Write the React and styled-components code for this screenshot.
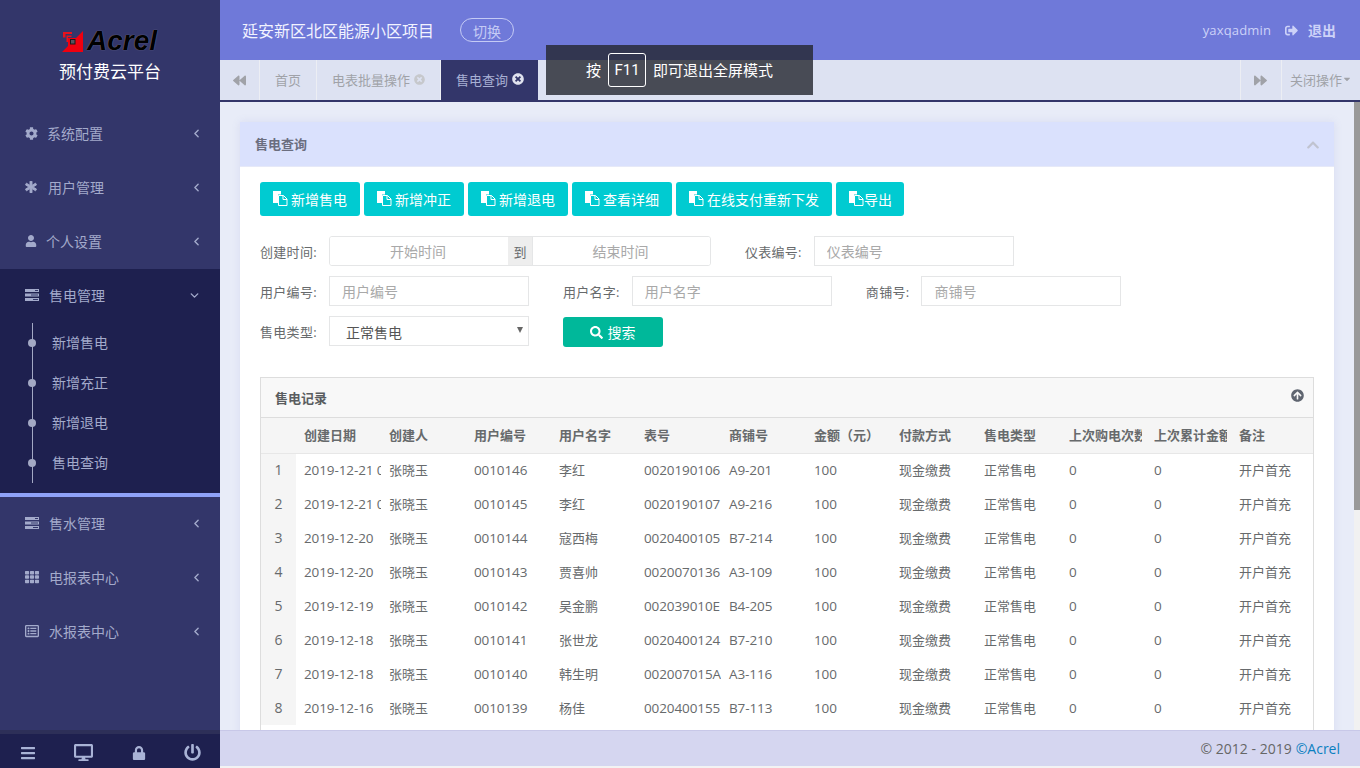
import React from 'react'
import styled, { createGlobalStyle } from 'styled-components'
import {
  FaCog, FaAsterisk, FaUser, FaTh, FaRegListAlt, FaBars, FaDesktop, FaLock, FaPowerOff,
  FaBackward, FaForward, FaSignOutAlt, FaSearch, FaChevronUp, FaArrowCircleUp,
  FaTimesCircle, FaCaretDown,
} from 'react-icons/fa'
import { ChevronLeft, ChevronDown } from 'lucide-react'

const FONT = '"Open Sans", "Noto Sans CJK SC", sans-serif'

const GlobalStyle = createGlobalStyle`
  html, body { margin: 0; padding: 0; height: 100%; overflow: hidden; }
  body { font-family: ${FONT}; font-size: 13px; color: #676a6c; background: #f3f3f3; }
  * { box-sizing: border-box; }
`

const TasksIcon = () => (
  <svg width="14" height="12" viewBox="0 0 14 12" fill="currentColor">
    <rect x="0" y="0" width="14" height="3" />
    <rect x="0" y="4.5" width="14" height="3" />
    <rect x="0" y="9" width="14" height="3" />
    <rect x="10" y="1" width="3" height="1" fill="#33366a" />
    <rect x="6" y="5.5" width="7" height="1" fill="#33366a" />
    <rect x="8" y="10" width="5" height="1" fill="#33366a" />
  </svg>
)

const FilesIcon = () => (
  <svg width="15" height="15" viewBox="0 0 15 15">
    <path d="M0 0h8v3.5H5V12H0z" fill="#fff" />
    <path d="M5.5 4.5h5l3.5 3.5v6.5H5.5z" fill="none" stroke="#fff" />
    <path d="M10 4.5v4h4" fill="none" stroke="#fff" />
  </svg>
)

const LogoMark = () => (
  <svg width="21" height="21" viewBox="0 0 21 21">
    <path d="M21 0v21H0l6-6V7h8z" fill="#f0000f" />
    <path d="M1 1h9v2H3.5v3.5H1z" fill="#e8121c" />
    <path d="M4.5 4.5h5V6H6v5H4.5z" fill="#e8121c" />
    <rect x="8.5" y="8.5" width="4.5" height="4.5" fill="#55555f" stroke="#1a1a1a" />
  </svg>
)

const menuTop = [
  { label: '系统配置', icon: <FaCog size={13} />, slot: 22 },
  { label: '用户管理', icon: <FaAsterisk size={12} stroke="currentColor" strokeWidth={40} />, slot: 23 },
  { label: '个人设置', icon: <FaUser size={12} />, slot: 21 },
]
const menuBottom = [
  { label: '售水管理', icon: <TasksIcon />, slot: 24 },
  { label: '电报表中心', icon: <FaTh size={14} />, slot: 24 },
  { label: '水报表中心', icon: <FaRegListAlt size={14} />, slot: 24 },
]
const subMenu = ['新增售电', '新增充正', '新增退电', '售电查询']
const actions = [
  { label: '新增售电' },
  { label: '新增冲正' },
  { label: '新增退电' },
  { label: '查看详细' },
  { label: '在线支付重新下发' },
  { label: '导出', tight: true },
]
const columns = ['创建日期', '创建人', '用户编号', '用户名字', '表号', '商铺号', '金额（元）', '付款方式', '售电类型', '上次购电次数', '上次累计金额', '备注']
const records = [
  ['2019-12-21 09:12:33', '0010146', '李红', '0020190106', 'A9-201'],
  ['2019-12-21 09:05:18', '0010145', '李红', '0020190107', 'A9-216'],
  ['2019-12-20', '0010144', '寇西梅', '0020400105', 'B7-214'],
  ['2019-12-20', '0010143', '贾喜帅', '0020070136', 'A3-109'],
  ['2019-12-19', '0010142', '吴金鹏', '002039010E', 'B4-205'],
  ['2019-12-18', '0010141', '张世龙', '0020400124', 'B7-210'],
  ['2019-12-18', '0010140', '韩生明', '002007015A', 'A3-116'],
  ['2019-12-16', '0010139', '杨佳', '0020400155', 'B7-113'],
]

export default function App() {
  return (
    <Page>
      <GlobalStyle />
      <Sidebar>
        <Brand>
          <Logo>
            <LogoMark />
            <LogoWord>Acrel</LogoWord>
          </Logo>
          <BrandTitle>预付费云平台</BrandTitle>
        </Brand>
        <Menu>
          {menuTop.map((m) => (
            <MenuItem key={m.label}>
              <MenuIcon $slot={m.slot}>{m.icon}</MenuIcon>
              <span>{m.label}</span>
              <Arrow><ChevronLeft size={13} strokeWidth={2.6} /></Arrow>
            </MenuItem>
          ))}
          <ActiveGroup>
            <MenuItem>
              <MenuIcon $slot={24}><TasksIcon /></MenuIcon>
              <span>售电管理</span>
              <ArrowDown><ChevronDown size={13} strokeWidth={2.6} /></ArrowDown>
            </MenuItem>
            <SubList>
              {subMenu.map((s) => (
                <SubItem key={s}>{s}</SubItem>
              ))}
            </SubList>
          </ActiveGroup>
          {menuBottom.map((m) => (
            <MenuItem key={m.label}>
              <MenuIcon $slot={m.slot}>{m.icon}</MenuIcon>
              <span>{m.label}</span>
              <Arrow><ChevronLeft size={13} strokeWidth={2.6} /></Arrow>
            </MenuItem>
          ))}
        </Menu>
        <SideFooter>
          <FaBars size={16} />
          <FaDesktop size={19} />
          <FaLock size={14} />
          <FaPowerOff size={17} />
        </SideFooter>
      </Sidebar>

      <Main>
        <TopBar>
          <ProjectName>延安新区北区能源小区项目</ProjectName>
          <SwitchButton>切换</SwitchButton>
          <UserBox>
            <UserName>yaxqadmin</UserName>
            <FaSignOutAlt size={13} />
            <Logout>退出</Logout>
          </UserBox>
        </TopBar>

        <TabBar>
          <TabArrow $left><FaBackward size={13} /></TabArrow>
          <Tab>首页</Tab>
          <Tab>
            电表批量操作
            <TabClose><FaTimesCircle size={11} /></TabClose>
          </Tab>
          <Tab $active>
            售电查询
            <TabClose $active><FaTimesCircle size={12} /></TabClose>
          </Tab>
          <TabSpacer />
          <TabArrow><FaForward size={13} /></TabArrow>
          <CloseMenu>
            关闭操作
            <FaCaretDown size={10} />
          </CloseMenu>
        </TabBar>

        <FullscreenToast>
          按<KeyCap>F11</KeyCap>即可退出全屏模式
        </FullscreenToast>

        <Body>
          <Scroller>
            <Panel>
              <PanelHead>
                <span>售电查询</span>
                <Collapse><FaChevronUp size={14} /></Collapse>
              </PanelHead>
              <PanelBody>
                <Actions>
                  {actions.map((a) => (
                    <ActionButton key={a.label} $tight={a.tight}>
                      <FilesIcon />
                      <span>{a.label}</span>
                    </ActionButton>
                  ))}
                </Actions>

                <FormRow>
                  <Field>
                    <Label>创建时间:</Label>
                    <DateRange>
                      <DateInput $start placeholder="开始时间" />
                      <RangeAddon>到</RangeAddon>
                      <DateInput placeholder="结束时间" />
                    </DateRange>
                  </Field>
                  <Field>
                    <Label>仪表编号:</Label>
                    <TextInput placeholder="仪表编号" />
                  </Field>
                </FormRow>
                <FormRow>
                  <Field>
                    <Label>用户编号:</Label>
                    <TextInput placeholder="用户编号" />
                  </Field>
                  <Field>
                    <Label>用户名字:</Label>
                    <TextInput placeholder="用户名字" />
                  </Field>
                  <Field>
                    <Label>商铺号:</Label>
                    <TextInput placeholder="商铺号" />
                  </Field>
                </FormRow>
                <FormRow>
                  <Field>
                    <Label>售电类型:</Label>
                    <SelectBox>
                      正常售电
                      <SelectCaret />
                    </SelectBox>
                  </Field>
                  <SearchButton>
                    <FaSearch size={13} />
                    搜索
                  </SearchButton>
                </FormRow>

                <RecordPanel>
                  <RecordHead>
                    <span>售电记录</span>
                    <FaArrowCircleUp size={13} />
                  </RecordHead>
                  <Table>
                    <colgroup>
                      <IndexCol />
                      {columns.map((c) => <DataCol key={c} />)}
                    </colgroup>
                    <thead>
                      <tr>
                        <HeadCell />
                        {columns.map((c) => (
                          <HeadCell key={c}><HeadLabel>{c}</HeadLabel></HeadCell>
                        ))}
                      </tr>
                    </thead>
                    <tbody>
                      {records.map((r, i) => (
                        <tr key={r[1]}>
                          <IndexCell>{i + 1}</IndexCell>
                          <Cell $num>{r[0]}</Cell>
                          <Cell>张晓玉</Cell>
                          <Cell $num>{r[1]}</Cell>
                          <Cell>{r[2]}</Cell>
                          <Cell $num>{r[3]}</Cell>
                          <Cell $num>{r[4]}</Cell>
                          <Cell $num>100</Cell>
                          <Cell>现金缴费</Cell>
                          <Cell>正常售电</Cell>
                          <Cell $num>0</Cell>
                          <Cell $num>0</Cell>
                          <Cell>开户首充</Cell>
                        </tr>
                      ))}
                    </tbody>
                  </Table>
                </RecordPanel>
              </PanelBody>
            </Panel>
          </Scroller>
          <ScrollTrack>
            <ScrollThumb />
          </ScrollTrack>
        </Body>

        <Footer>
          © 2012 - 2019 <FooterLink>©Acrel</FooterLink>
        </Footer>
      </Main>
    </Page>
  )
}

const Page = styled.div`
  display: flex;
  width: 1360px;
  height: 768px;
  overflow: hidden;
`

const Sidebar = styled.aside`
  width: 220px;
  flex: none;
  display: flex;
  flex-direction: column;
  background: #33366a;
  color: #a3aacb;
  font-size: 14px;
`

const Brand = styled.div`
  height: 107px;
  padding-top: 30px;
  display: flex;
  flex-direction: column;
  align-items: center;
`

const Logo = styled.div`
  display: flex;
  align-items: center;
  gap: 4px;
  height: 22px;
  margin-left: -1px;
`

const LogoWord = styled.span`
  font-family: "Liberation Sans", sans-serif;
  font-weight: 700;
  font-style: italic;
  font-size: 28px;
  line-height: 22px;
  color: #000;
  text-shadow: 0 0 1px #9a9aa8;
`

const BrandTitle = styled.div`
  margin-top: 9px;
  color: #fff;
  font-size: 17px;
  line-height: 22px;
`

const Menu = styled.nav`
  flex: 1;
`

const MenuItem = styled.div`
  height: 54px;
  padding: 0 17px 2px 25px;
  display: flex;
  align-items: center;
`

const MenuIcon = styled.span`
  width: ${(p) => p.$slot}px;
  flex: none;
  display: flex;
  align-items: center;
`

const Arrow = styled.span`
  margin-left: auto;
  display: flex;
`

const ArrowDown = styled(Arrow)`
  margin-right: 2px;
`

const ActiveGroup = styled.div`
  background: #1e204f;
  border-bottom: 4px solid #8fa2f8;
  height: 228px;
`

const SubList = styled.ul`
  list-style: none;
  margin: 0 0 0 32px;
  padding: 0;
  border-left: 1px solid #a3a8c4;
  height: 160px;
`

const SubItem = styled.li`
  height: 40px;
  padding: 0 0 2px 19px;
  display: flex;
  align-items: center;
  position: relative;
  &::before {
    content: '';
    position: absolute;
    left: -5px;
    top: 16px;
    width: 8px;
    height: 8px;
    border-radius: 50%;
    background: #a3a8c4;
  }
`

const SideFooter = styled.div`
  height: 38px;
  border-top: 4px solid #2d2f58;
  background: #1e204f;
  display: flex;
  align-items: center;
  justify-content: space-between;
  padding: 3px 19px 0 20px;
  color: #a9b3d6;
`

const Main = styled.div`
  flex: 1;
  min-width: 0;
  display: flex;
  flex-direction: column;
  padding-bottom: 2px;
  position: relative;
`

const TopBar = styled.header`
  height: 60px;
  flex: none;
  background: #6f79d9;
  display: flex;
  align-items: center;
  padding: 0 24px 0 22px;
`

const ProjectName = styled.div`
  color: #f2f3ff;
  font-size: 16px;
`

const SwitchButton = styled.div`
  margin-left: 26px;
  width: 54px;
  height: 24px;
  border: 1px solid #c5cbf5;
  border-radius: 12px;
  color: #c5cbf5;
  font-size: 14px;
  padding-top: 1px;
  display: flex;
  align-items: center;
  justify-content: center;
`

const UserBox = styled.div`
  margin-left: auto;
  display: flex;
  align-items: center;
  color: #cdd2f8;
  font-size: 13px;
`

const UserName = styled.span`
  margin-right: 14px;
  letter-spacing: 0.15px;
`

const Logout = styled.span`
  margin-left: 10px;
  font-size: 14px;
  font-weight: 700;
`

const TabBar = styled.div`
  height: 42px;
  flex: none;
  background: #dde2f2;
  border-bottom: 2px solid #33366a;
  display: flex;
  color: #a0a2a8;
  font-size: 13px;
`

const TabArrow = styled.div`
  width: ${(p) => (p.$left ? '40px' : '41px')};
  display: flex;
  align-items: center;
  justify-content: center;
  color: #a0a2a8;
  border-right: ${(p) => (p.$left ? '1px solid #eceef4' : 'none')};
  border-left: ${(p) => (p.$left ? 'none' : '1px solid #eceef4')};
  padding-right: ${(p) => (p.$left ? '0' : '2px')};
`

const Tab = styled.div`
  padding: 0 ${(p) => (p.$active ? 14 : 15)}px 2px 15px;
  display: flex;
  align-items: center;
  white-space: nowrap;
  border-right: ${(p) => (p.$active ? 'none' : '1px solid #eceef4')};
  background: ${(p) => (p.$active ? '#33366a' : 'transparent')};
  color: ${(p) => (p.$active ? '#a8b0d4' : '#a0a2a8')};
`

const TabClose = styled.span`
  margin-left: 4px;
  display: flex;
  color: ${(p) => (p.$active ? '#e0e2ee' : '#c6c8cc')};
`

const TabSpacer = styled.div`
  flex: 1;
`

const CloseMenu = styled.div`
  width: 79px;
  padding: 0 0 2px 8px;
  display: flex;
  align-items: center;
  white-space: nowrap;
  border-left: 1px solid #eceef4;
`

const FullscreenToast = styled.div`
  position: absolute;
  left: 326px;
  top: 45px;
  width: 267px;
  height: 50px;
  padding-bottom: 2px;
  background: rgba(35, 37, 45, 0.8);
  color: #fff;
  font-size: 15px;
  display: flex;
  align-items: center;
  justify-content: center;
  z-index: 5;
`

const KeyCap = styled.span`
  width: 38px;
  height: 34px;
  margin: 2px 7px 0;
  border: 1px solid #fff;
  border-radius: 3px;
  font-family: Roboto, sans-serif;
  display: flex;
  align-items: center;
  justify-content: center;
`

const Body = styled.div`
  flex: 1;
  min-height: 0;
  display: flex;
  background: #e8ecf8;
`

const Scroller = styled.div`
  flex: 1;
  min-width: 0;
  padding: 20px 20px 0;
  overflow: hidden;
`

const ScrollTrack = styled.div`
  width: 6px;
  flex: none;
  background: #f1f1f1;
`

const ScrollThumb = styled.div`
  height: 408px;
  background: #999;
`

const Panel = styled.section`
  box-shadow: 0 0 8px rgba(120, 130, 200, 0.15);
  background: #fff;
`

const PanelHead = styled.div`
  height: 45px;
  padding: 0 14px 2px 15px;
  background: #dae1fd;
  border-bottom: 1px solid #e6e9f8;
  display: flex;
  align-items: center;
  justify-content: space-between;
  font-weight: 700;
  color: #6b6e80;
`

const Collapse = styled.span`
  display: flex;
  color: #c0c3d0;
  padding-top: 3px;
`

const PanelBody = styled.div`
  padding: 15px 20px 0;
`

const Actions = styled.div`
  display: flex;
  gap: 4px;
  margin-bottom: 20px;
`

const ActionButton = styled.div`
  height: 34px;
  padding: 0 ${(p) => (p.$tight ? 12 : 13)}px 1px 13px;
  border-radius: 3px;
  background: #00cbd1;
  color: #fff;
  font-size: 14px;
  display: flex;
  align-items: center;
  gap: ${(p) => (p.$tight ? 0 : 3)}px;
  white-space: nowrap;
`

const FormRow = styled.div`
  display: flex;
  align-items: flex-start;
  gap: 34px;
  height: 30px;
  margin-bottom: 10px;
`

const Field = styled.div`
  display: flex;
  align-items: center;
`

const Label = styled.label`
  margin-right: 12px;
  color: #676a6c;
  font-size: 13px;
  letter-spacing: 0.3px;
  white-space: nowrap;
`

const TextInput = styled.input`
  width: 200px;
  height: 30px;
  padding: 0 12px;
  border: 1px solid #e5e6e7;
  outline: none;
  font: 14px ${FONT};
  color: #676a6c;
  background: #fff;
  &::placeholder { color: #a9a9a9; opacity: 1; }
`

const DateRange = styled.div`
  width: 382px;
  height: 30px;
  display: flex;
  border: 1px solid #e5e6e7;
  border-radius: 3px;
  overflow: hidden;
`

const DateInput = styled.input`
  flex: ${(p) => (p.$start ? '0 0 178px' : '1')};
  min-width: 0;
  padding: 0 2px 0 0;
  border: none;
  outline: none;
  text-align: center;
  font: 14px ${FONT};
  &::placeholder { color: #a9a9a9; opacity: 1; }
`

const RangeAddon = styled.span`
  width: 25px;
  flex: none;
  background: #eee;
  border-right: 1px solid #e5e6e7;
  display: flex;
  align-items: center;
  justify-content: center;
  font-size: 13px;
`

const SelectBox = styled.div`
  width: 200px;
  height: 30px;
  padding: 1px 0 0 16px;
  border: 1px solid #e5e6e7;
  font-size: 14px;
  color: #555;
  display: flex;
  align-items: center;
  position: relative;
`

const SelectCaret = styled.span`
  position: absolute;
  right: 5px;
  top: 10px;
  border-left: 3px solid transparent;
  border-right: 3px solid transparent;
  border-top: 6px solid #666;
`

const SearchButton = styled.div`
  width: 100px;
  height: 30px;
  margin-top: 1px;
  border-radius: 3px;
  background: #00b89a;
  color: #fff;
  font-size: 14px;
  display: flex;
  align-items: center;
  justify-content: center;
  gap: 4px;
`

const RecordPanel = styled.div`
  margin-top: 31px;
  border: 1px solid #dddddd;
  height: 400px;
  overflow: hidden;
`

const RecordHead = styled.div`
  height: 40px;
  padding: 0 9px 0 14px;
  background: #f8f8f8;
  border-bottom: 1px solid #dddddd;
  display: flex;
  align-items: center;
  justify-content: space-between;
  font-weight: 700;
  color: #5a5d60;
  svg { color: #5f6570; margin-top: -5px; }
`

const Table = styled.table`
  table-layout: fixed;
  border-collapse: collapse;
  width: 1055px;
`

const IndexCol = styled.col`
  width: 35px;
`

const DataCol = styled.col`
  width: 85px;
`

const HeadCell = styled.th`
  height: 35px;
  padding: 0 0 1px 8px;
  background: #f5f5f5;
  border-bottom: 1px solid #e7e7e7;
  text-align: left;
  font-weight: 700;
  font-size: 13px;
  color: #676a6c;
`

const HeadLabel = styled.div`
  width: 73px;
  overflow: hidden;
  white-space: nowrap;
`

const IndexCell = styled.td`
  height: 34px;
  background: #f5f5f5;
  text-align: center;
  padding: 0 0 1px;
  font-size: 14px;
`

const Cell = styled.td`
  height: 34px;
  padding: 0 0 1px 8px;
  overflow: hidden;
  white-space: nowrap;
  font-size: ${(p) => (p.$num ? '13.5px' : '13px')};
  letter-spacing: ${(p) => (p.$num ? '-0.1px' : '0')};
`

const Footer = styled.footer`
  height: 36px;
  flex: none;
  border-top: 1px solid #c8c8e8;
  background: #d5d6f0;
  display: flex;
  align-items: center;
  justify-content: flex-end;
  gap: 4px;
  padding-right: 20px;
  color: #666;
  font-size: 14px;
`

const FooterLink = styled.span`
  color: #0a7fc0;
`
